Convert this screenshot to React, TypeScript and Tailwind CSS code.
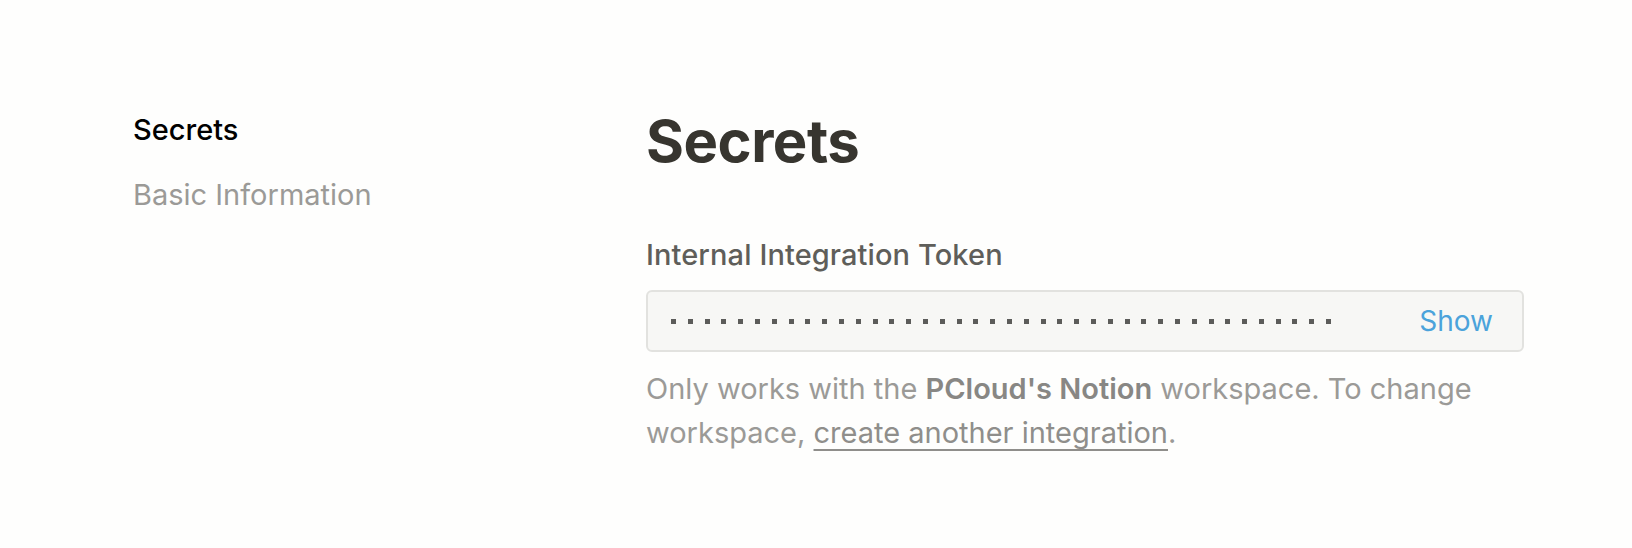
import React from 'react';

const navItems = [
  { label: 'Secrets', active: true },
  { label: 'Basic Information', active: false },
];

const TokenDots: React.FC<{ count: number }> = ({ count }) => (
  <div className="flex items-center gap-[11.8px]">
    {Array.from({ length: count }).map((_, i) => (
      <span key={i} className="block w-[5px] h-[5px] bg-[#5c5c5a]" />
    ))}
  </div>
);

const App: React.FC = () => {
  return (
    <div
      className="w-[1632px] h-[548px] bg-[#fefefd] flex pt-[106px] pl-[133px]"
      style={{ fontFamily: 'Inter, "Noto Sans", sans-serif' }}
    >
      <nav className="w-[513px] flex flex-col gap-[25px] mt-[4px]">
        {navItems.map((item) => (
          <div
            key={item.label}
            className={
              item.active
                ? 'text-[29px] leading-[40px] font-medium text-black'
                : 'text-[29px] leading-[40px] text-[#9b9a97]'
            }
          >
            {item.label}
          </div>
        ))}
      </nav>

      <main className="w-[878px] flex flex-col">
        <h1 className="text-[58px] leading-[70px] font-bold text-[#37352f] tracking-[-0.5px]">Secrets</h1>

        <div className="mt-[59px] text-[29px] leading-[40px] font-medium text-[#5f5e5a] tracking-[0.1px]">
          Internal Integration Token
        </div>

        <div className="mt-[15px] h-[62px] rounded-[6px] border-2 border-[#e2e2df] bg-[#f7f7f5] flex items-center justify-between pl-[23px] pr-[29px]">
          <TokenDots count={40} />
          <button type="button" className="text-[28px] text-[#4ba3db]">
            Show
          </button>
        </div>

        <p className="mt-[15px] text-[29px] leading-[44px] text-[#9b9a97]">
          Only works with the <span className="font-semibold text-[#888784]">PCloud's Notion</span> workspace. To
          change workspace,{' '}
          <a href="#" className="underline decoration-[1.5px] underline-offset-[6px] text-[#8f8e8b]">
            create another integration
          </a>
          .
        </p>
      </main>
    </div>
  );
};

export default App;
